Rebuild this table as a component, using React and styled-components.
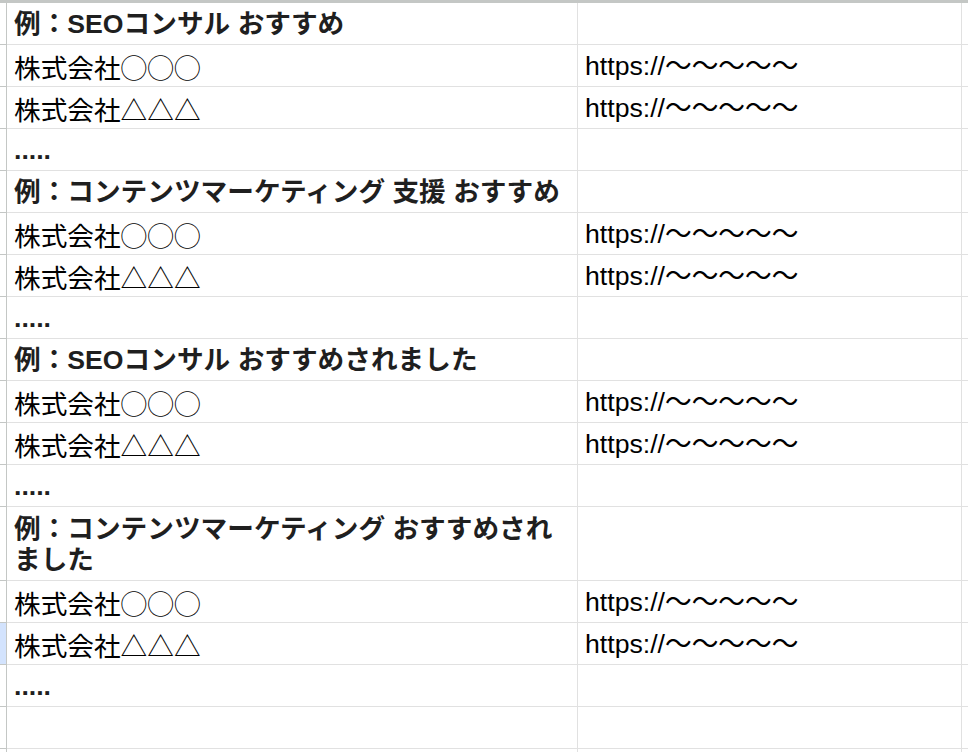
import React from "react";
import styled, { createGlobalStyle } from "styled-components";

const Global = createGlobalStyle`
  html, body { margin: 0; padding: 0; background: #ffffff; }
  body { font-family: "Liberation Sans", "Noto Sans CJK JP", sans-serif; }
`;

const Sheet = styled.div`
  width: 968px;
  height: 752px;
  overflow: hidden;
  border-top: 3px solid #c4c7c5;
  box-sizing: border-box;
  background: #fff;
`;

const Row = styled.div`
  display: grid;
  grid-template-columns: 7px 571px 384px 1fr;
  height: ${(p) => (p.$tall ? 74 : 42)}px;
`;

const RowHeader = styled.div`
  box-sizing: border-box;
  border-right: 1px solid #c4c7c5;
  border-bottom: 1px solid #c4c7c5;
  background: ${(p) => (p.$selected ? "#d3e3fd" : "#ffffff")};
`;

const Cell = styled.div`
  box-sizing: border-box;
  border-right: 1px solid #e1e1e1;
  border-bottom: 1px solid #e1e1e1;
  display: flex;
  flex-direction: column;
  justify-content: flex-end;
  padding: 0 6px 4px 7px;
  overflow: hidden;
  font-family: ${(p) =>
    p.$cjk
      ? '"Noto Sans CJK JP", "Liberation Sans", sans-serif'
      : '"Liberation Sans", "Noto Sans CJK JP", sans-serif'};
  font-size: 26.67px;
  line-height: 31px;
  font-weight: ${(p) => (p.$bold ? 700 : 400)};
  color: ${(p) => (p.$bold ? "#1f1f1f" : "#000000")};
  white-space: normal;
  word-break: normal;
`;

const URL = "https://〜〜〜〜〜";

const rows = [
  { kind: "title", a: "例：SEOコンサル おすすめ" },
  { a: "株式会社◯◯◯", b: URL, cjk: true },
  { a: "株式会社△△△", b: URL, cjk: true },
  { kind: "dots" },
  { kind: "title", a: "例：コンテンツマーケティング 支援 おすすめ" },
  { a: "株式会社◯◯◯", b: URL, cjk: true },
  { a: "株式会社△△△", b: URL, cjk: true },
  { kind: "dots" },
  { kind: "title", a: "例：SEOコンサル おすすめされました" },
  { a: "株式会社◯◯◯", b: URL, cjk: true },
  { a: "株式会社△△△", b: URL, cjk: true },
  { kind: "dots" },
  { kind: "title", a: "例：コンテンツマーケティング おすすめされました", tall: true },
  { a: "株式会社◯◯◯", b: URL, cjk: true },
  { a: "株式会社△△△", b: URL, cjk: true, selected: true },
  { kind: "dots" },
  { kind: "empty" },
  { kind: "empty" },
];

export default function App() {
  return (
    <>
      <Global />
      <Sheet>
        {rows.map((r, i) => {
          const bold = r.kind === "title" || r.kind === "dots";
          const a = r.kind === "dots" ? "....." : r.a || "";
          return (
            <Row key={i} $tall={r.tall}>
              <RowHeader $selected={r.selected} />
              <Cell $bold={bold} $cjk={r.cjk}>{a}</Cell>
              <Cell>{r.b || ""}</Cell>
              <Cell />
            </Row>
          );
        })}
      </Sheet>
    </>
  );
}
